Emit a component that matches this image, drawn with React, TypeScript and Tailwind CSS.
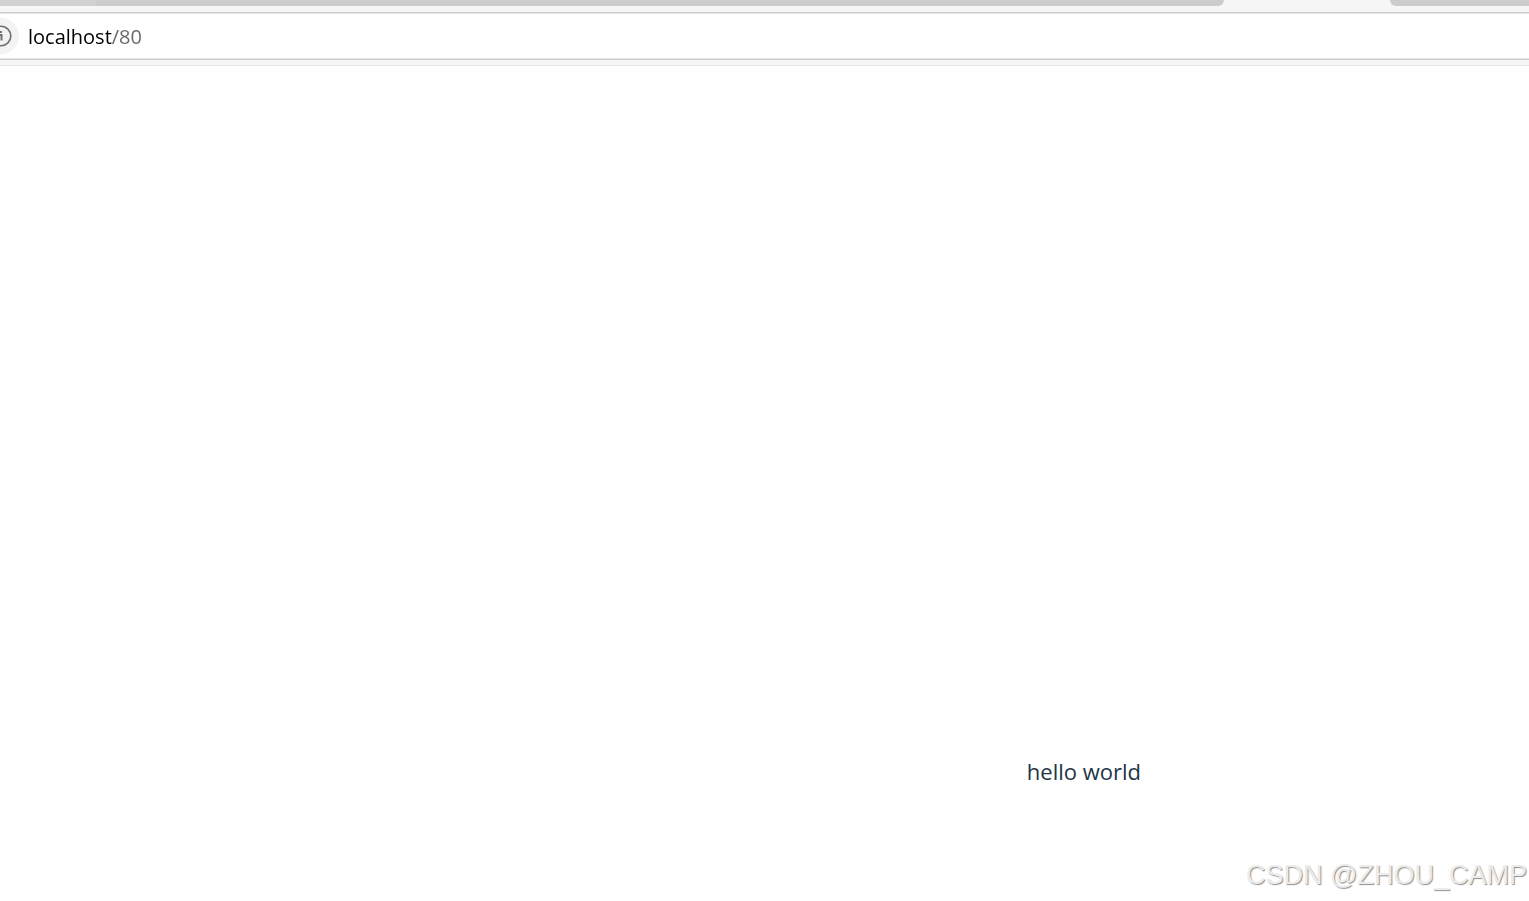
function TabStrip() {
  return (
    <div className="flex h-3 items-start bg-[#f6f6f6]">
      <div className="h-1.5 w-24 bg-[#d1d1d1]" />
      <div className="h-1.5 flex-1 rounded-br-lg bg-[#cccccc]" />
      {/* Active tab, same colour as the toolbar */}
      <div className="w-[166px]" />
      <div className="h-1.5 w-[139px] rounded-bl-lg bg-[#cccccc]" />
    </div>
  );
}

function AddressBar() {
  return (
    <div className="flex h-12 items-center overflow-hidden border-y border-[#cecece] bg-white shadow-[inset_0_1px_0_#e6e6e6,inset_0_-1px_0_#e6e6e6]">
      <button
        type="button"
        aria-label="View site information"
        className="-ml-[17px] flex size-9 shrink-0 items-center justify-center rounded-full bg-[#f3f3f3]"
      >
        <svg viewBox="0 0 22 22" className="size-[22px]" fill="none" stroke="#707070" strokeWidth="1.6">
          <circle cx="11" cy="11" r="9.8" />
          <path d="M9.5 10h2v5.5M11 6v2" strokeWidth="2" />
        </svg>
      </button>
      {/* Host is black, the path after it is grey */}
      <input
        type="text"
        aria-label="Address"
        defaultValue="localhost/80"
        spellCheck={false}
        className="ml-[9px] min-w-0 flex-1 bg-[linear-gradient(to_right,#000_84px,#666_84px)] bg-clip-text pt-0.5 font-['Open_Sans','Noto_Sans',sans-serif] text-[20px] text-transparent caret-black outline-none"
      />
    </div>
  );
}

export default function App() {
  return (
    <div className="relative flex min-h-screen flex-col bg-white">
      <header>
        <TabStrip />
        <AddressBar />
        <div className="h-1.5 border-b border-[#e6e6e6] bg-[#f6f6f6]" />
      </header>

      <main className="flex flex-1 items-end justify-end pr-[388px] pb-[114px]">
        <p className="font-['Open_Sans','Noto_Sans',sans-serif] text-[22px] leading-8 text-[#213547]">
          hello world
        </p>
      </main>

      {/* Watermark */}
      <div className="absolute right-0.5 bottom-2 font-['Liberation_Sans',Arial,sans-serif] text-[27px] leading-9 whitespace-nowrap text-[#ececec] [text-shadow:1px_1px_1px_#909090]">
        CSDN @ZHOU_CAMP
      </div>
    </div>
  );
}
